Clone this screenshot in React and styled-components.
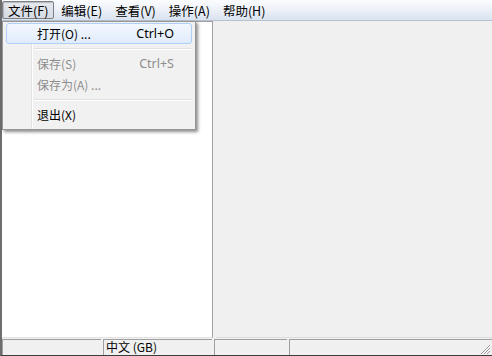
import styled, { createGlobalStyle } from "styled-components";

const Global = createGlobalStyle`
  html, body { margin: 0; padding: 0; background: #f0f0f0; }
  body { font-family: "Noto Sans CJK SC", "Noto Sans", sans-serif; font-size: 12px; color: #000; }
`;

const menus = ["文件(F)", "编辑(E)", "查看(V)", "操作(A)", "帮助(H)"];

const App = () => {
  return (
    <>
      <Global />
      <Window>
        <MenuBar>
          {menus.map((m, i) => (
            <MenuTitle key={m} open={i === 0}>{m}</MenuTitle>
          ))}
        </MenuBar>
        <Body>
          <LeftPane />
          <Splitter />
          <RightPane />
          <Dropdown>
            <Item active>
              <Label>打开(O) ...</Label>
              <Shortcut>Ctrl+O</Shortcut>
            </Item>
            <Separator />
            <Item disabled>
              <Label>保存(S)</Label>
              <Shortcut>Ctrl+S</Shortcut>
            </Item>
            <Item disabled>
              <Label>保存为(A) ...</Label>
            </Item>
            <Separator />
            <Item>
              <Label>退出(X)</Label>
            </Item>
          </Dropdown>
        </Body>
        <StatusBar>
          <Pane w={101} />
          <Pane w={111}>中文 (GB)</Pane>
          <Pane w={75} />
          <Pane grow>
            <Grip viewBox="0 0 12 12" width="12" height="12">
              <path d="M11 2 L2 11 M11 5 L5 11 M11 8 L8 11" stroke="#a0a0a0" strokeWidth="1" />
            </Grip>
          </Pane>
        </StatusBar>
      </Window>
    </>
  );
};

export default App;

const Window = styled.div`
  width: 492px;
  height: 356px;
  box-sizing: border-box;
  border-left: 2px solid #6d6d6d;
  border-bottom: 1px solid #3c3c3c;
  display: flex;
  flex-direction: column;
  background: #f0f0f0;
`;

const MenuBar = styled.div`
  height: 20px;
  display: flex;
  align-items: center;
  gap: 1px;
  background: linear-gradient(#fbfcfe, #eef2f8 45%, #d9e2f1);
  border-bottom: 1px solid #b9c1cd;
  flex-shrink: 0;
`;

const MenuTitle = styled.div`
  height: 18px;
  line-height: 17px;
  padding: 0 5px;
  box-sizing: border-box;
  font-size: 12.5px;
  border: 1px solid ${(p) => (p.open ? "#7b7f86" : "transparent")};
  border-radius: 2px;
  background: ${(p) => (p.open ? "linear-gradient(#e6e9ee, #d6dbe3)" : "transparent")};
  box-shadow: ${(p) => (p.open ? "inset 1px 1px 1px rgba(0,0,0,0.2)" : "none")};
  white-space: nowrap;
`;

const Body = styled.div`
  flex: 1;
  display: flex;
  position: relative;
  min-height: 0;
`;

const LeftPane = styled.div`
  width: 211px;
  background: #fff;
  box-sizing: border-box;
  border-top: 1px solid #a0a0a0;
  border-right: 1px solid #a0a0a0;
  border-bottom: 1px solid #e3e3e3;
`;

const Splitter = styled.div`
  width: 3px;
  background: #f0f0f0;
`;

const RightPane = styled.div`
  flex: 1;
  background: #f0f0f0;
  border-bottom: 1px solid #dcdcdc;
`;

const Dropdown = styled.div`
  position: absolute;
  left: 0;
  top: 0;
  width: 194px;
  box-sizing: border-box;
  padding: 1px 3px 4px 3px;
  background: linear-gradient(90deg, #f1f1f1 0 28px, #e2e3e3 28px 29px, #ffffff 29px 30px, #f1f1f1 30px);
  border: 1px solid #979797;
  box-shadow: 2px 2px 3px rgba(0, 0, 0, 0.45);
`;

const Item = styled.div`
  height: 21px;
  display: flex;
  align-items: center;
  box-sizing: border-box;
  padding: 0 17px 1px 30px;
  border-radius: 3px;
  border: 1px solid ${(p) => (p.active ? "#aecff7" : "transparent")};
  background: ${(p) => (p.active ? "linear-gradient(#f2f7fd, #e1ecfb)" : "transparent")};
  color: ${(p) => (p.disabled ? "#8d8d8d" : "#000")};
  white-space: nowrap;
`;

const Label = styled.span`
  flex: 1;
`;

const Shortcut = styled.span`
  font-family: "Noto Sans", sans-serif;
  font-size: 12.5px;
`;

const Separator = styled.div`
  height: 1px;
  margin: 4px 0 3px 28px;
  background: #e0e0e0;
  border-bottom: 1px solid #fff;
`;

const StatusBar = styled.div`
  height: 16px;
  display: flex;
  gap: 2px;
  flex-shrink: 0;
  padding-top: 1px;
`;

const Pane = styled.div`
  ${(p) => (p.grow ? "flex: 1;" : `width: ${p.w - 2}px;`)}
  position: relative;
  box-sizing: border-box;
  border-top: 1px solid #a0a0a0;
  border-left: 1px solid #a0a0a0;
  font-family: "Noto Sans CJK SC", serif;
  font-size: 12px;
  line-height: 14px;
  padding-left: 2px;
  white-space: pre;
  overflow: hidden;
`;

const Grip = styled.svg`
  position: absolute;
  right: 1px;
  bottom: 0;
`;
